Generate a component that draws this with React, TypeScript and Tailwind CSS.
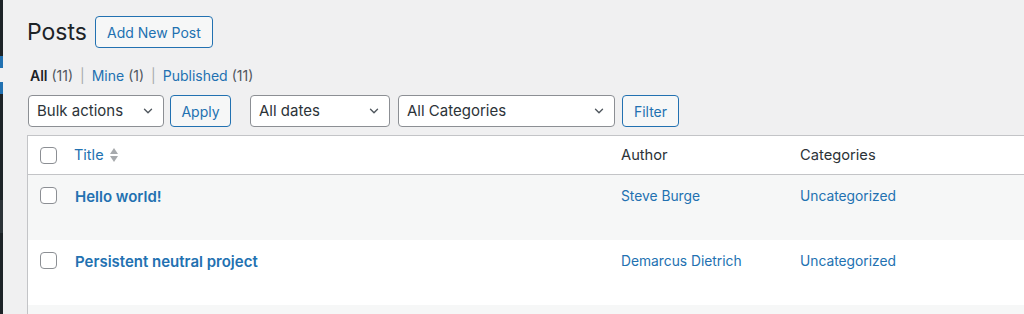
import React from "react";

const font = { fontFamily: "Inter, 'Noto Sans', 'Liberation Sans', sans-serif" };

function Chevron() {
  return (
    <svg width="14" height="14" viewBox="0 0 20 20" className="shrink-0">
      <path d="M5 7.5l5 5 5-5" fill="none" stroke="#50575e" strokeWidth="2" strokeLinecap="round" strokeLinejoin="round" />
    </svg>
  );
}

function Select({ label, w }: { label: string; w: string }) {
  return (
    <div className={`${w} h-[32px] flex items-center justify-between pl-[8px] pr-[8px] bg-white border border-[#8c8f94] rounded-[4px] text-[15px] text-[#2c3338]`}>
      <span>{label}</span>
      <Chevron />
    </div>
  );
}

function Btn({ label, w }: { label: string; w: string }) {
  return (
    <div className={`${w} h-[32px] flex items-center justify-center bg-[#f6f7f7] border border-[#2271b1] rounded-[4px] text-[14px] text-[#2271b1]`}>
      {label}
    </div>
  );
}

function Check() {
  return <div className="w-[17px] h-[17px] bg-white border border-[#8c8f94] rounded-[4px]" />;
}

function Row({ title, author, striped }: { title: string; author: string; striped: boolean }) {
  return (
    <div className={`flex h-[65px] pt-[12px] ${striped ? "bg-[#f6f7f7]" : "bg-white"}`}>
      <div className="w-[46px] pl-[12px]">
        <Check />
      </div>
      <div className="w-[547px] pl-[1px] text-[15px] font-semibold text-[#2271b1] leading-[17px] pt-[1px]">{title}</div>
      <div className="w-[179px] text-[13.8px] text-[#2271b1] leading-[17px] pt-[1px]">{author}</div>
      <div className="flex-1 text-[13.8px] text-[#2271b1] leading-[17px] pt-[1px]">Uncategorized</div>
    </div>
  );
}

export default function App() {
  return (
    <div className="w-[1024px] h-[314px] flex overflow-hidden bg-[#f0f0f1]" style={font}>
      <div className="w-[3px] shrink-0 flex flex-col bg-[#1d2327]">
        <div className="h-[56px]" />
        <div className="h-[12px] bg-[#2271b1]" />
        <div className="h-[14px] bg-[#f0f0f1]" />
        <div className="h-[12px] bg-[#2271b1]" />
        <div className="h-[106px]" />
        <div className="h-[33px] bg-[#2c3338]" />
      </div>
      <div className="flex-1 pl-[24px] flex flex-col min-w-0">
        <div className="flex items-center gap-[8px] pt-[16px] h-[48px]">
          <h1 className="text-[23px] text-[#1d2327] leading-[32px] font-normal">Posts</h1>
          <Btn label="Add New Post" w="w-[118px]" />
        </div>
        <div className="mt-[19px] pl-[3px] text-[14px] leading-[18px] text-[#50575e]">
          <span className="font-semibold text-[#1d2327]">All</span> (11)
          <span className="text-[#a7aaad] mx-[7px]">|</span>
          <span className="text-[#2271b1]">Mine</span> (1)
          <span className="text-[#a7aaad] mx-[7px]">|</span>
          <span className="text-[#2271b1]">Published</span> (11)
        </div>
        <div className="flex items-center mt-[10px] pl-[1px]">
          <Select label="Bulk actions" w="w-[136px]" />
          <div className="w-[6px]" />
          <Btn label="Apply" w="w-[61px]" />
          <div className="w-[19px]" />
          <Select label="All dates" w="w-[140px]" />
          <div className="w-[8px]" />
          <Select label="All Categories" w="w-[217px]" />
          <div className="w-[7px]" />
          <Btn label="Filter" w="w-[57px]" />
        </div>
        <div className="mt-[8px] w-[1100px] border border-[#c3c4c7] bg-white">
          <div className="flex items-center h-[39px] border-b border-[#c3c4c7]">
            <div className="w-[46px] pl-[12px]">
              <Check />
            </div>
            <div className="w-[547px] flex items-center gap-[5px] text-[14.5px] text-[#2271b1]">
              Title
              <svg width="10" height="16" viewBox="0 0 10 16">
                <path d="M5 1L9 7H1z" fill="#a7aaad" />
                <path d="M5 15L9 9H1z" fill="#a7aaad" />
              </svg>
            </div>
            <div className="w-[179px] text-[14.7px] text-[#2c3338]">Author</div>
            <div className="flex-1 text-[14.7px] text-[#2c3338]">Categories</div>
          </div>
          <Row title="Hello world!" author="Steve Burge" striped />
          <Row title="Persistent neutral project" author="Demarcus Dietrich" striped={false} />
          <div className="h-[20px] bg-[#f6f7f7]" />
        </div>
      </div>
    </div>
  );
}
